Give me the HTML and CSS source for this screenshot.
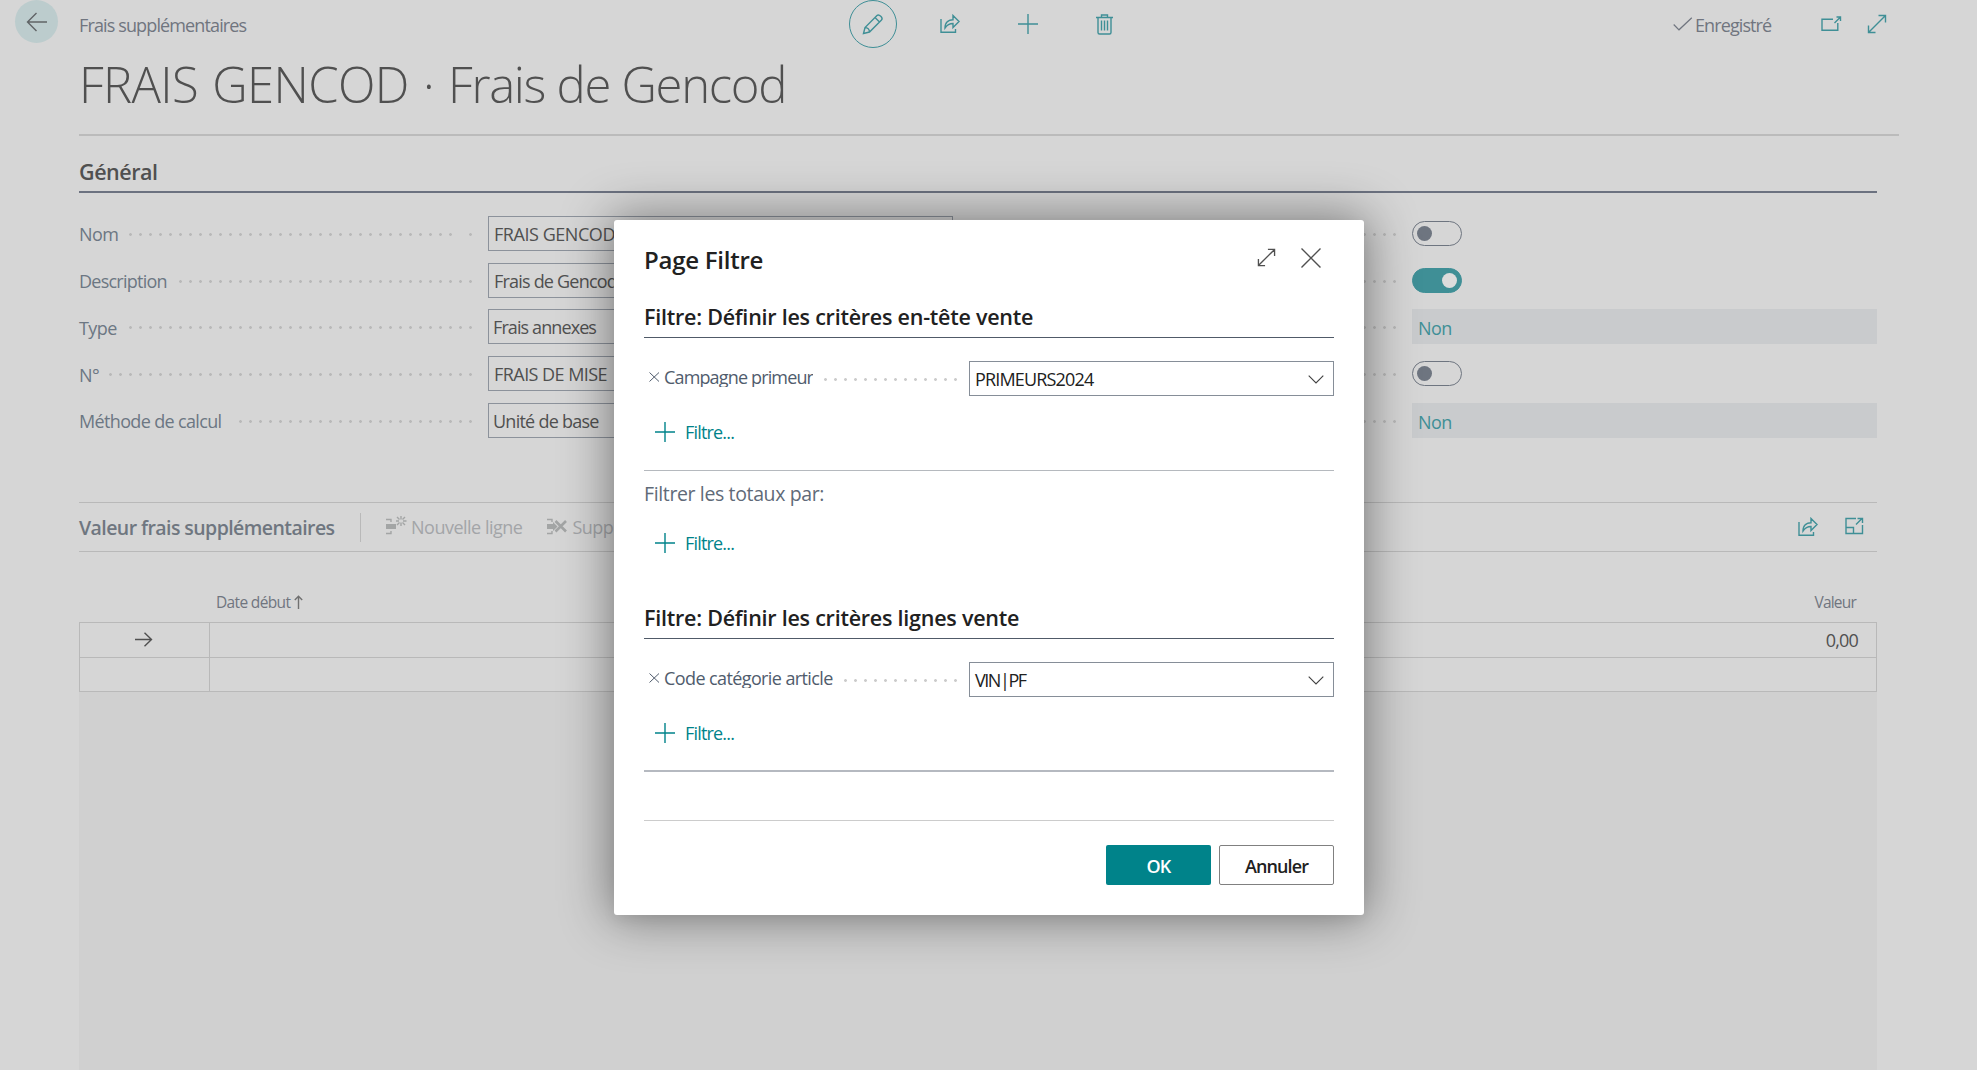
FILE: index.html
```html
<!DOCTYPE html>
<html lang="fr">
<head>
<meta charset="utf-8">
<title>Frais supplémentaires</title>
<link rel="stylesheet" href="styles.css">
</head>
<body>
<svg class="defs" width="0" height="0">
  <symbol id="share" viewBox="0 0 20 20"><path d="M1 5V18.3H15.5V15M5 14C5 8 9 5.7 13 5.7V1.5L19 7.6L13 13.5V9.5C9.500 9.500 7 11 5 14Z"/></symbol>
  <symbol id="expand" viewBox="0 0 20 20"><path d="M1.500 18.500L18.500 1.500M11.500 1.500H18.500V8.500M1.500 11.500V18.500H8.500"/></symbol>
  <symbol id="plus" viewBox="0 0 20 20"><path d="M10 0V20M0 10H20"/></symbol>
  <symbol id="cross" viewBox="0 0 20 20"><path d="M.5 .5L19.500 19.500M19.500 .5L.5 19.500"/></symbol>
  <symbol id="chevron" viewBox="0 0 16 9"><path d="M.7 .7L8 8L15.300 .7"/></symbol>
</svg>

<div class="page">
  <header class="topbar">
    <button class="back"><svg width="22" height="20" viewBox="0 0 22 20"><path d="M10.500 1L1.500 10L10.500 19M1.500 10H21"/></svg></button>
    <span class="crumb"><span class="t-crumb">Frais supplémentaires</span></span>
    <span class="edit"><svg width="22" height="22" viewBox="0 0 22 22"><path d="M1.500 20.500L3 14.500L15 2.500C17 .5 21.500 5 19.500 7L7.500 19L1.500 20.500ZM3 14.500C5.500 14.500 7.500 16.500 7.500 19M13 4.500L17.500 9"/></svg></span>
    <svg class="ic share"><use href="#share"/></svg>
    <svg class="ic add"><use href="#plus"/></svg>
    <svg class="trash" width="17" height="21" viewBox="0 0 17 21"><path d="M0 3.500H17M5.500 3.500V1H11.500V3.500M2 3.500V18.500Q2 20 3.500 20H13.500Q15 20 15 18.500V3.500M5.500 6.500V16.500M8.500 6.500V16.500M11.500 6.500V16.500"/></svg>
    <svg class="check" width="20" height="14" viewBox="0 0 20 14"><path d="M.7 7.500L6 12.800L18.800 .7"/></svg>
    <span class="saved"><span class="t-saved">Enregistré</span></span>
    <svg class="popout" width="21" height="15" viewBox="0 0 21 15"><path d="M12 3.300H1V14.300H16.800V7M13.500 7L19.500 1M15.500 1H19.500V5"/></svg>
    <svg class="ic full"><use href="#expand"/></svg>
  </header>

  <h1 class="title"><span class="t-code">FRAIS GENCOD · </span><span class="t-name">Frais de Gencod</span></h1>

  <main class="content">
    <h2 class="group"><span class="t-group">Général</span></h2>
    <div class="fields">
      <div class="col">
        <div class="row"><label class="w1"><span>Nom</span></label><i class="dots gap"></i><div class="input"><span class="t-v1">FRAIS GENCOD</span></div></div>
        <div class="row"><label class="w2"><span class="t-desc">Description</span></label><i class="dots"></i><div class="input"><span class="t-v2">Frais de Gencod</span></div></div>
        <div class="row"><label class="w1"><span>Type</span></label><i class="dots"></i><div class="input select"><span class="t-v3">Frais annexes</span></div></div>
        <div class="row"><label class="w0"><span>N°</span></label><i class="dots"></i><div class="input"><span class="t-v4">FRAIS DE MISE</span></div></div>
        <div class="row"><label class="w3"><span class="t-meth">Méthode de calcul</span></label><i class="dots"></i><div class="input select"><span class="t-v5">Unité de base</span></div></div>
      </div>
      <div class="col right">
        <div class="row"><i class="dots"></i><div class="toggle"><b></b></div></div>
        <div class="row"><i class="dots"></i><div class="toggle on"><b></b></div></div>
        <div class="row"><i class="dots"></i><div class="readonly">Non</div></div>
        <div class="row"><i class="dots"></i><div class="toggle"><b></b></div></div>
        <div class="row"><i class="dots"></i><div class="readonly">Non</div></div>
      </div>
    </div>

    <div class="subbar">
      <h3><span class="t-sub">Valeur frais supplémentaires</span></h3>
      <div class="action">
        <svg width="21" height="20" viewBox="0 0 21 20"><path class="fill" d="M0 9H10V14H0Z"/><path d="M0 4.500H5V7M0 18.500H5V16M15 1V4.500M15 7.500V11M10 6H13M17 6H20.500M11 2L13.500 4.500M19 2L16.500 4.500M11 10L13.500 7.500M19 10L16.500 7.500"/></svg>
        <span class="t-new">Nouvelle ligne</span>
      </div>
      <div class="action">
        <svg width="21" height="20" viewBox="0 0 21 20"><path class="fill" d="M0 9H6V7L10.500 11.500L6 16V14H0Z"/><path d="M0 4.500H5V7M0 18.500H5V16"/><path class="bold" d="M8.500 6L19 16.500M19 6L8.500 16.500"/></svg>
        <span>Supprimer</span>
      </div>
      <div class="tools">
        <svg class="ic"><use href="#share"/></svg>
        <svg width="19" height="18" viewBox="0 0 19 18"><path d="M11 1.500H1V16.500H17.500V8M1 10.500H8.500V16.500M11 7.500L17 1.500M12.500 1.500H17.500V6"/></svg>
      </div>
    </div>

    <div class="thead"><span class="t-date">Date début</span><svg width="9" height="14" viewBox="0 0 9 14"><path d="M4.500 14V1.500M.8 5L4.500 1.300L8.200 5"/></svg><span class="t-val">Valeur</span></div>
    <div class="grid">
      <div class="cell"><svg width="18" height="15" viewBox="0 0 18 15"><path d="M0 7.500H16.500M9.500 .7L16.500 7.500L9.500 14.300"/></svg></div>
      <div class="cell num"><span class="t-num">0,00</span></div>
      <div class="cell"></div><div class="cell"></div>
    </div>
    <div class="rest"></div>
  </main>
</div>

<section class="dialog">
  <div class="dhead">
    <h2><span class="t-dtitle">Page Filtre</span></h2>
    <svg class="dexp"><use href="#expand"/></svg>
    <svg class="dclose"><use href="#cross"/></svg>
  </div>
  <h3 class="dgroup"><span class="t-g1">Filtre: Définir les critères en-tête vente</span></h3>
  <div class="drow">
    <svg viewBox="0 0 11 10"><path d="M.5 .5L10 9.500M10 .5L.5 9.500"/></svg><label><span class="t-l1">Campagne primeur</span></label><i class="dots d1"></i>
    <div class="combo"><span class="t-c1">PRIMEURS2024</span><svg><use href="#chevron"/></svg></div>
  </div>
  <div class="addf"><svg><use href="#plus"/></svg><span>Filtre...</span></div>
  <div class="totals"><span class="t-tot">Filtrer les totaux par:</span></div>
  <div class="addf second"><svg><use href="#plus"/></svg><span>Filtre...</span></div>
  <h3 class="dgroup two"><span class="t-g2">Filtre: Définir les critères lignes vente</span></h3>
  <div class="drow">
    <svg viewBox="0 0 11 10"><path d="M.5 .5L10 9.500M10 .5L.5 9.500"/></svg><label><span class="t-l2">Code catégorie article</span></label><i class="dots d2"></i>
    <div class="combo"><span class="t-c2">VIN|PF</span><svg><use href="#chevron"/></svg></div>
  </div>
  <div class="addf last"><svg><use href="#plus"/></svg><span>Filtre...</span></div>
  <div class="endline"></div>
  <footer><button class="ok">OK</button><button class="cancel"><span class="t-ann">Annuler</span></button></footer>
</section>
</body>
</html>
```
FILE: styles.css
```css
* { box-sizing: border-box; }
body { margin: 0; height: 1070px; overflow: hidden; background: #d6d6d6; color: #505050; font: 18px/24px "Open Sans", "Noto Sans", sans-serif; letter-spacing: -.55px; position: relative; }
h1, h2, h3 { margin: 0; font-weight: 600; }
svg { fill: none; stroke: #3f8f96; stroke-width: 1.4; flex: none; display: block; }
span { white-space: nowrap; }
.defs { position: absolute; }
button { font: inherit; letter-spacing: inherit; padding: 0; border: 0; }
.page { height: 1070px; display: flex; flex-direction: column; }

.topbar { height: 49px; display: flex; align-items: flex-start; padding-left: 15px; color: #70757f; }
.back { width: 43px; height: 43px; border-radius: 50%; background: #bccccd; display: flex; align-items: center; justify-content: center; }
.back svg { stroke: #606466; }
.crumb { width: 770px; margin: 13px 0 0 21px; }
.t-crumb { letter-spacing: -.87px; }
.edit { width: 48px; height: 48px; border: 1px solid #3f8f96; border-radius: 50%; display: flex; align-items: center; justify-content: center; }
.ic { width: 20px; height: 20px; }
.share { margin: 14px 0 0 43px; }
.add { margin: 14px 0 0 58px; }
.trash { margin: 14px 0 0 58px; }
.check { margin: 17px 0 0 560px; stroke: #70757f; stroke-width: 1.2; }
.saved { width: 126px; margin: 13px 0 0 2px; }
.t-saved { letter-spacing: -.9px; }
.popout { margin-top: 16px; }
.full { margin: 14px 0 0 25px; }

.title { margin: 0 0 0 79px; width: 1820px; height: 87px; border-bottom: 2px solid #bbb; font-size: 49px; font-weight: 300; line-height: 70px; }
.t-code { letter-spacing: -.62px; word-spacing: 2px; white-space: pre; }
.t-name { letter-spacing: -1.300px; }
.content { margin: 0 100px 0 79px; width: 1798px; flex: 1; display: flex; flex-direction: column; }
.group { height: 57px; padding-top: 22px; border-bottom: 2px solid #6c7280; font-size: 21.500px; line-height: 28px; letter-spacing: -.45px; }
.fields { display: flex; justify-content: space-between; margin-top: 17px; height: 292px; }
.col { width: 874px; }
.right { width: 844px; }
.row { height: 46.750px; display: flex; align-items: center; color: #6c7783; }
.row label { padding-top: 2px; }
.t-desc { letter-spacing: -.75px; }
.t-meth { letter-spacing: -.65px; }
.dots { flex: 1; height: 3px; margin: 2px 9px 0 0; background: radial-gradient(circle at 1.500px 1.500px, #b9b9b9 1px, transparent 1.700px) 0 0 / 10px 3px repeat-x; }
/* the leader of the first row has one dot missing near its end */
.gap { -webkit-mask: linear-gradient(90deg, #000 325px, transparent 325px 338px, #000 338px); mask: linear-gradient(90deg, #000 325px, transparent 325px 338px, #000 338px); }
.w0 { width: 30px; } .w1 { width: 50px; } .w2 { width: 100px; } .w3 { width: 160px; }
.input { width: 465px; height: 35px; border: 1px solid #8c929b; padding: 5px; color: #505050; }
.select { padding-left: 4px; }
.t-v1 { letter-spacing: -.45px; }
.t-v2 { letter-spacing: -.8px; }
.t-v3 { letter-spacing: -.9px; }
.t-v5 { letter-spacing: -.75px; }
.right .dots { margin-right: 15px; }
.toggle { width: 50px; height: 25px; border: 1px solid #6e7580; border-radius: 13px; margin-right: 415px; padding: 4px; display: flex; }
.toggle b { width: 15px; height: 15px; border-radius: 50%; background: #6e7580; }
.on { background: #3f8f96; border-color: #3f8f96; justify-content: flex-end; }
.on b { background: #dcdcdc; }
.readonly { width: 465px; height: 35px; background: #c9cbcd; color: #3f8f96; padding: 7px 6px; }

.subbar { height: 50px; border: solid #b9b9b9; border-width: 1px 0; display: flex; align-items: center; color: #a3a5a8; }
.subbar h3 { width: 282px; height: 29px; border-right: 1px solid #b9b9b9; font-size: 19.500px; line-height: 29px; color: #6f7680; letter-spacing: -.57px; }
.action { display: flex; align-items: center; gap: 4px; margin-left: 25px; }
.action svg { stroke: #a3a5a5; margin-top: -4px; }
.t-new { letter-spacing: -.5px; }
.fill { fill: #a3a5a5; stroke: none; }
.bold { stroke-width: 2.600; }
.tools { margin-left: auto; display: flex; gap: 27px; padding-right: 13px; }

.thead { height: 70px; display: flex; padding: 38px 21px 0 137px; font-size: 15.500px; letter-spacing: -.65px; color: #70757f; }
.thead svg { margin: 5px 0 0 4px; stroke: #707070; }
.t-val { margin-left: auto; letter-spacing: -.8px; }
.grid { display: grid; grid-template-columns: 130px 1fr; grid-template-rows: 35px 34px; border-top: 1px solid #b9b9b9; border-left: 1px solid #b9b9b9; height: 70px; }
.cell { border: solid #b9b9b9; border-width: 0 1px 1px 0; padding: 9px 18px 0 55px; }
.cell svg { stroke: #505050; }
.num { text-align: right; padding-top: 5px; letter-spacing: -.8px; }
.rest { flex: 1; background: #d0d0d0; }

.dialog { position: absolute; left: 614px; top: 220px; width: 750px; height: 695px; background: #fff; border-radius: 3px; box-shadow: 0 0 50px 4px rgba(0,0,0,.42), 0 5px 14px rgba(0,0,0,.05); padding: 0 30px; color: #212121; }
.dhead { display: flex; height: 76px; }
.dhead h2 { flex: 1; font-size: 24px; line-height: 32px; padding-top: 24px; letter-spacing: -.25px; }
.dhead svg { stroke: #505050; }
.dexp { width: 19px; height: 19px; margin-top: 28px; }
.dclose { width: 20px; height: 20px; margin: 28px 13px 0 25px; }
.dgroup { height: 42px; border-bottom: 1px solid #505a68; font-size: 21.500px; line-height: 30px; padding-top: 6px; letter-spacing: -.24px; }
.drow { height: 59px; padding-top: 23px; display: flex; color: #505c6d; }
.drow > svg { width: 11px; height: 10px; margin: 11px 4px 0 5px; stroke: #505c6d; stroke-width: 1; }
.drow label { height: 26px; overflow: hidden; padding-top: 4px; }
.t-l1 { letter-spacing: -.85px; }
.t-l2 { letter-spacing: -.6px; }
.drow .dots { flex: none; width: 135px; margin: 17px 10px 0 auto; background-image: radial-gradient(circle at 1.500px 1.500px, #ccc 1.100px, transparent 1.700px); }
.drow .d2 { width: 115px; }
.combo { width: 365px; height: 35px; border: 1px solid #868e98; padding: 5px 9px 0 5px; display: flex; justify-content: space-between; color: #212121; }
.t-c1 { letter-spacing: -.83px; }
.t-c2 { letter-spacing: -1.450px; }
.combo svg { width: 16px; height: 9px; margin-top: 8px; stroke: #404040; stroke-width: 1.1; }
.addf { height: 73px; padding: 25px 0 0 11px; display: flex; gap: 10px; color: #00838a; letter-spacing: -.82px; }
.addf svg { width: 20px; height: 20px; stroke: #00838a; }
.addf span { margin-top: -2px; }
.totals { border-top: 1px solid #b5b9be; height: 49px; padding-top: 11px; font-size: 19.500px; color: #606a78; letter-spacing: -.37px; }
.second { padding-top: 14px; height: 78px; }
.last { height: 72px; }
.endline { border-top: 2px solid #b5b9c0; height: 50px; }
footer { border-top: 1px solid #ccc; padding-top: 24px; display: flex; justify-content: flex-end; gap: 8px; font-weight: 600; }
.ok { width: 105px; height: 40px; padding-top: 2px; background: #00838a; color: #fff; border-radius: 2px; letter-spacing: -.8px; }
.cancel { width: 115px; height: 40px; padding-top: 2px; background: #fff; border: 1px solid #808080; border-radius: 2px; color: #212121; letter-spacing: -.9px; }
```
